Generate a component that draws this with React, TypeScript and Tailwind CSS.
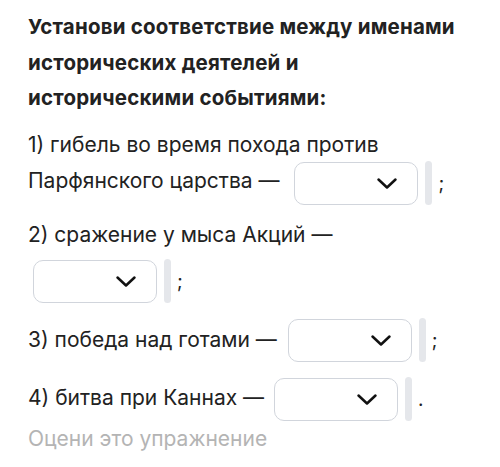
import React from "react";

function Chevron() {
  return (
    <svg width="22" height="13" viewBox="0 0 22 13" fill="none">
      <path d="M2.5 2.5 L11 10.5 L19.5 2.5" stroke="#111" strokeWidth="2.5" strokeLinecap="round" strokeLinejoin="round" />
    </svg>
  );
}

function Pick({ end }: { end: string }) {
  return (
    <span className="inline-flex items-center">
      <span className="inline-flex h-[43px] w-[124px] items-center justify-end rounded-[10px] border border-gray-300 bg-white pr-[19px]">
        <Chevron />
      </span>
      <span className="ml-[7px] h-[44px] w-[7px] rounded-sm bg-gray-200" />
      <span className="ml-[6px] text-[19px] leading-none">{end}</span>
    </span>
  );
}

export default function App() {
  return (
    <div className="h-[467px] w-[500px] bg-white px-[28px] pt-[9px] text-[#222]" style={{ fontFamily: "Inter, 'Noto Sans', sans-serif" }}>
      <h1 className="text-[20.5px] font-bold leading-[35.5px] tracking-[0.2px]">
        Установи соответствие между именами
        <br />
        исторических деятелей и
        <br />
        историческими событиями:
      </h1>
      <div className="text-[21px] leading-[35px]">
        <div className="mt-[11px]">1) гибель во время похода против</div>
        <div className="flex h-[43px] items-center">
          <span className="pb-[6px]">Парфянского царства —</span>
          <span className="ml-[15px]"><Pick end=";" /></span>
        </div>

        <div className="mt-[12px]">2) сражение у мыса Акций —</div>
        <div className="mt-[8px] flex h-[43px] items-center pl-[5px]">
          <Pick end=";" />
        </div>

        <div className="mt-[16px] flex h-[43px] items-center">
          <span className="pb-[2px]">3) победа над готами —</span>
          <span className="ml-[11px]"><Pick end=";" /></span>
        </div>

        <div className="mt-[16px] flex h-[43px] items-center">
          <span className="pb-[4px]">4) битва при Каннах —</span>
          <span className="ml-[10px]"><Pick end="." /></span>
        </div>

        <div className="text-[#b4b4b4]">Оцени это упражнение</div>
      </div>
    </div>
  );
}
